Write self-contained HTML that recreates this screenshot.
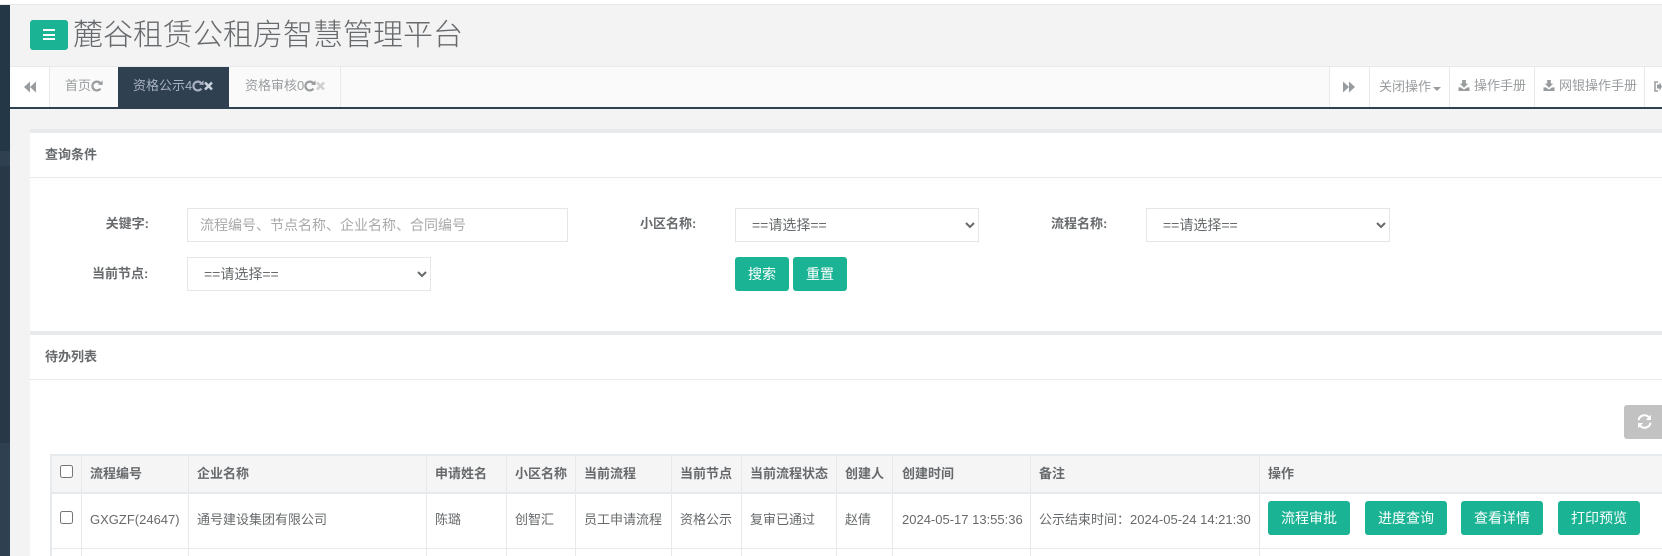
<!DOCTYPE html>
<html lang="zh"><head><meta charset="utf-8"><title>麓谷租赁公租房智慧管理平台</title>
<style>
html,body{margin:0;padding:0;width:1662px;height:556px;overflow:hidden;background:#fff}
body{position:relative;font-family:"Liberation Sans","Noto Sans CJK SC",sans-serif;font-size:13px;color:#676a6c}
.b{position:absolute;box-sizing:border-box}
.t{position:absolute;white-space:nowrap;line-height:20px;height:20px}
.h{font-weight:700}
.g{color:#a7b1c2}
.m{color:#999c9e}
.btn{position:absolute;box-sizing:border-box;background:#1ab394;color:#fff;border-radius:3px;font-size:14px;text-align:center;line-height:34px;height:34px}
select,input{position:absolute;box-sizing:border-box;height:34px;border:1px solid #e5e6e7;background:#fff;border-radius:0;font:14px "Liberation Sans","Noto Sans CJK SC",sans-serif;color:#676a6c;padding:0 12px;margin:0;outline:none}
input::placeholder{color:#a9a9a9;opacity:1}
.cb{position:absolute;box-sizing:border-box;width:13px;height:13px;border:1px solid #767676;border-radius:2.5px;background:#fff}
svg{position:absolute;display:block}
</style></head><body>

<!-- top line -->
<div class="b" style="left:0;top:4px;width:1662px;height:1px;background:#e7e7e7"></div>
<!-- sidebar -->
<div class="b" style="left:0;top:5px;width:10px;height:146px;background:#243747"></div>
<div class="b" style="left:0;top:151px;width:10px;height:15px;background:#2f4050"></div>
<div class="b" style="left:0;top:166px;width:10px;height:277px;background:#293846"></div>
<div class="b" style="left:0;top:443px;width:10px;height:113px;background:#2f4050"></div>
<!-- page bg -->
<div class="b" style="left:10px;top:5px;width:1652px;height:551px;background:#f3f3f4"></div>

<!-- header -->
<div class="b" style="left:30px;top:20px;width:38px;height:30px;background:#1ab394;border-radius:3px"></div>
<div class="b" style="left:43px;top:29px;width:12px;height:2px;background:#fff"></div>
<div class="b" style="left:43px;top:34px;width:12px;height:2px;background:#fff"></div>
<div class="b" style="left:43px;top:38px;width:12px;height:2px;background:#fff"></div>
<div class="t" style="left:73px;top:16px;height:40px;line-height:40px;font-size:30px;font-weight:300;color:#676a6c">麓谷租赁公租房智慧管理平台</div>

<!-- tabs -->
<div class="b" style="left:10px;top:66px;width:1652px;height:41px;background:#fafafa;border-top:1px solid #e7eaec"></div>
<div class="b" style="left:10px;top:67px;width:40px;height:40px;background:#fff;border-right:1px solid #e7eaec"></div>
<svg style="left:24px;top:81px" width="12" height="12" viewBox="0 0 13 12"><path fill="#999c9e" d="M6.500 0v12L0 6zM13 0v12L6.500 6z"/></svg>
<div class="b" style="left:50px;top:67px;width:68px;height:40px;background:#fafafa"></div>
<div class="t m" style="left:65px;top:76px">首页</div>
<svg style="left:91px;top:80px" width="12" height="12" viewBox="0 0 12 12"><path fill="none" stroke="#999c9e" stroke-width="2.2" d="M9.400 8.600A4.400 4.400 0 1 1 9.200 3.200"/><path fill="#999c9e" d="M7 4.800 11.600 5V.4z"/></svg>
<div class="b" style="left:118px;top:67px;width:111px;height:40px;background:#2f4050"></div>
<div class="t g" style="left:133px;top:76px">资格公示4</div>
<svg style="left:192px;top:80px" width="12" height="12" viewBox="0 0 12 12"><path fill="none" stroke="#a7b1c2" stroke-width="2.2" d="M9.400 8.600A4.400 4.400 0 1 1 9.200 3.200"/><path fill="#a7b1c2" d="M7 4.800 11.600 5V.4z"/></svg>
<svg style="left:204px;top:81px" width="9" height="10" viewBox="0 0 9 10"><path stroke="#c8d0dc" stroke-width="2.6" d="M1 1.500 8 8.500M8 1.500 1 8.500"/></svg>
<div class="t m" style="left:245px;top:76px">资格审核0</div>
<svg style="left:304px;top:80px" width="12" height="12" viewBox="0 0 12 12"><path fill="none" stroke="#999c9e" stroke-width="2.2" d="M9.400 8.600A4.400 4.400 0 1 1 9.200 3.200"/><path fill="#999c9e" d="M7 4.800 11.600 5V.4z"/></svg>
<svg style="left:316px;top:81px" width="9" height="10" viewBox="0 0 9 10"><path stroke="#cfcfcf" stroke-width="2.6" d="M1 1.500 8 8.500M8 1.500 1 8.500"/></svg>
<div class="b" style="left:340px;top:67px;width:1px;height:40px;background:#e7eaec"></div>

<!-- tabs right -->
<div class="b" style="left:1329px;top:67px;width:333px;height:40px;background:#fff"></div>
<div class="b" style="left:1329px;top:67px;width:1px;height:40px;background:#e7eaec"></div>
<div class="b" style="left:1369px;top:67px;width:1px;height:40px;background:#e7eaec"></div>
<div class="b" style="left:1449px;top:67px;width:1px;height:40px;background:#e7eaec"></div>
<div class="b" style="left:1534px;top:67px;width:1px;height:40px;background:#e7eaec"></div>
<div class="b" style="left:1644px;top:67px;width:1px;height:40px;background:#e7eaec"></div>
<svg style="left:1343px;top:81px" width="12" height="12" viewBox="0 0 13 12"><path fill="#999c9e" d="M0 0v12L6.500 6zM6.500 0v12L13 6z"/></svg>
<div class="t m" style="left:1379px;top:77px">关闭操作</div>
<svg style="left:1433px;top:87px" width="8" height="4" viewBox="0 0 8 4"><path fill="#999c9e" d="M0 0h8L4 4z"/></svg>
<svg style="left:1458px;top:80px" width="12" height="11" viewBox="0 0 12 12"><path fill="#999c9e" d="M4 0h4v4h2.600L6 8.400 1.400 4H4zM0 8h2.500L6 10.500 9.500 8H12v4H0z"/></svg>
<div class="t m" style="left:1474px;top:76px">操作手册</div>
<svg style="left:1543px;top:80px" width="12" height="11" viewBox="0 0 12 12"><path fill="#999c9e" d="M4 0h4v4h2.600L6 8.400 1.400 4H4zM0 8h2.500L6 10.500 9.500 8H12v4H0z"/></svg>
<div class="t m" style="left:1559px;top:76px">网银操作手册</div>
<svg style="left:1654px;top:81px" width="8" height="11" viewBox="0 0 8 11"><path fill="none" stroke="#999c9e" stroke-width="1.500" d="M4 1H1v9h3"/><path fill="#999c9e" d="M3 3.500h2.500V1L8 5.500 5.500 10V7.500H3z"/></svg>
<div class="b" style="left:10px;top:107px;width:1652px;height:2px;background:#2f4050"></div>

<!-- panel 1 -->
<div class="b" style="left:30px;top:129px;width:1632px;height:202px;background:#fff;border-top:4px solid #e7eaec"></div>
<div class="b" style="left:30px;top:177px;width:1632px;height:1px;background:#e7eaec"></div>
<div class="t h" style="left:45px;top:145px">查询条件</div>

<div class="t h" style="left:104px;top:214px;width:45px;text-align:right">关键字:</div>
<input style="left:187px;top:208px;width:381px" placeholder="流程编号、节点名称、企业名称、合同编号">
<div class="t h" style="left:640px;top:214px">小区名称:</div>
<select style="left:735px;top:208px;width:244px"><option>==请选择==</option></select>
<div class="t h" style="left:1051px;top:214px">流程名称:</div>
<select style="left:1146px;top:208px;width:244px"><option>==请选择==</option></select>
<div class="t h" style="left:92px;top:264px">当前节点:</div>
<select style="left:187px;top:257px;width:244px"><option>==请选择==</option></select>
<div class="btn" style="left:735px;top:257px;width:54px">搜索</div>
<div class="btn" style="left:793px;top:257px;width:54px">重置</div>

<!-- panel 2 -->
<div class="b" style="left:30px;top:331px;width:1632px;height:225px;background:#fff;border-top:4px solid #e7eaec"></div>
<div class="b" style="left:30px;top:379px;width:1632px;height:1px;background:#e7eaec"></div>
<div class="t h" style="left:45px;top:347px">待办列表</div>

<div class="b" style="left:1624px;top:405px;width:38px;height:34px;background:#c2c2c2;border-radius:3px 0 0 3px"></div>
<svg style="left:1637px;top:414px" width="15" height="15" viewBox="0 0 15 15"><g fill="none" stroke="#fff" stroke-width="2"><path d="M1.500 6.200A6 6 0 0 1 11.800 3.200"/><path d="M13.500 8.800A6 6 0 0 1 3.200 11.800"/></g><path fill="#fff" d="M14 .8v5.200H8.800zM1 14.200V9h5.200z"/></svg>

<!-- table -->
<div class="b" style="left:50px;top:454px;width:1612px;height:2px;background:#e7eaec"></div>
<div class="b" style="left:51px;top:456px;width:1611px;height:36px;background:#f5f5f6"></div>
<div class="b" style="left:50px;top:492px;width:1612px;height:2px;background:#e7eaec"></div>
<div class="b" style="left:50px;top:548px;width:1612px;height:1px;background:#e7eaec"></div>
<div class="b" style="left:50px;top:454px;width:2px;height:102px;background:#e7eaec"></div>
<div class="b" style="left:81px;top:454px;width:1px;height:102px;background:#e7eaec"></div>
<div class="b" style="left:188px;top:454px;width:1px;height:102px;background:#e7eaec"></div>
<div class="b" style="left:426px;top:454px;width:1px;height:102px;background:#e7eaec"></div>
<div class="b" style="left:506px;top:454px;width:1px;height:102px;background:#e7eaec"></div>
<div class="b" style="left:575px;top:454px;width:1px;height:102px;background:#e7eaec"></div>
<div class="b" style="left:671px;top:454px;width:1px;height:102px;background:#e7eaec"></div>
<div class="b" style="left:741px;top:454px;width:1px;height:102px;background:#e7eaec"></div>
<div class="b" style="left:836px;top:454px;width:1px;height:102px;background:#e7eaec"></div>
<div class="b" style="left:892px;top:454px;width:1px;height:102px;background:#e7eaec"></div>
<div class="b" style="left:1030px;top:454px;width:1px;height:102px;background:#e7eaec"></div>
<div class="b" style="left:1259px;top:454px;width:1px;height:102px;background:#e7eaec"></div>

<div class="cb" style="left:60px;top:465px"></div>
<div class="t h" style="left:90px;top:464px">流程编号</div>
<div class="t h" style="left:197px;top:464px">企业名称</div>
<div class="t h" style="left:435px;top:464px">申请姓名</div>
<div class="t h" style="left:515px;top:464px">小区名称</div>
<div class="t h" style="left:584px;top:464px">当前流程</div>
<div class="t h" style="left:680px;top:464px">当前节点</div>
<div class="t h" style="left:750px;top:464px">当前流程状态</div>
<div class="t h" style="left:845px;top:464px">创建人</div>
<div class="t h" style="left:902px;top:464px">创建时间</div>
<div class="t h" style="left:1039px;top:464px">备注</div>
<div class="t h" style="left:1268px;top:464px">操作</div>

<div class="cb" style="left:60px;top:511px"></div>
<div class="t" style="left:90px;top:510px">GXGZF(24647)</div>
<div class="t" style="left:197px;top:510px">通号建设集团有限公司</div>
<div class="t" style="left:435px;top:510px">陈璐</div>
<div class="t" style="left:515px;top:510px">创智汇</div>
<div class="t" style="left:584px;top:510px">员工申请流程</div>
<div class="t" style="left:680px;top:510px">资格公示</div>
<div class="t" style="left:750px;top:510px">复审已通过</div>
<div class="t" style="left:845px;top:510px">赵倩</div>
<div class="t" style="left:902px;top:510px">2024-05-17 13:55:36</div>
<div class="t" style="left:1039px;top:510px">公示结束时间：2024-05-24 14:21:30</div>
<div class="btn" style="left:1268px;top:501px;width:82px">流程审批</div>
<div class="btn" style="left:1365px;top:501px;width:82px">进度查询</div>
<div class="btn" style="left:1461px;top:501px;width:82px">查看详情</div>
<div class="btn" style="left:1558px;top:501px;width:82px">打印预览</div>

</body></html>
